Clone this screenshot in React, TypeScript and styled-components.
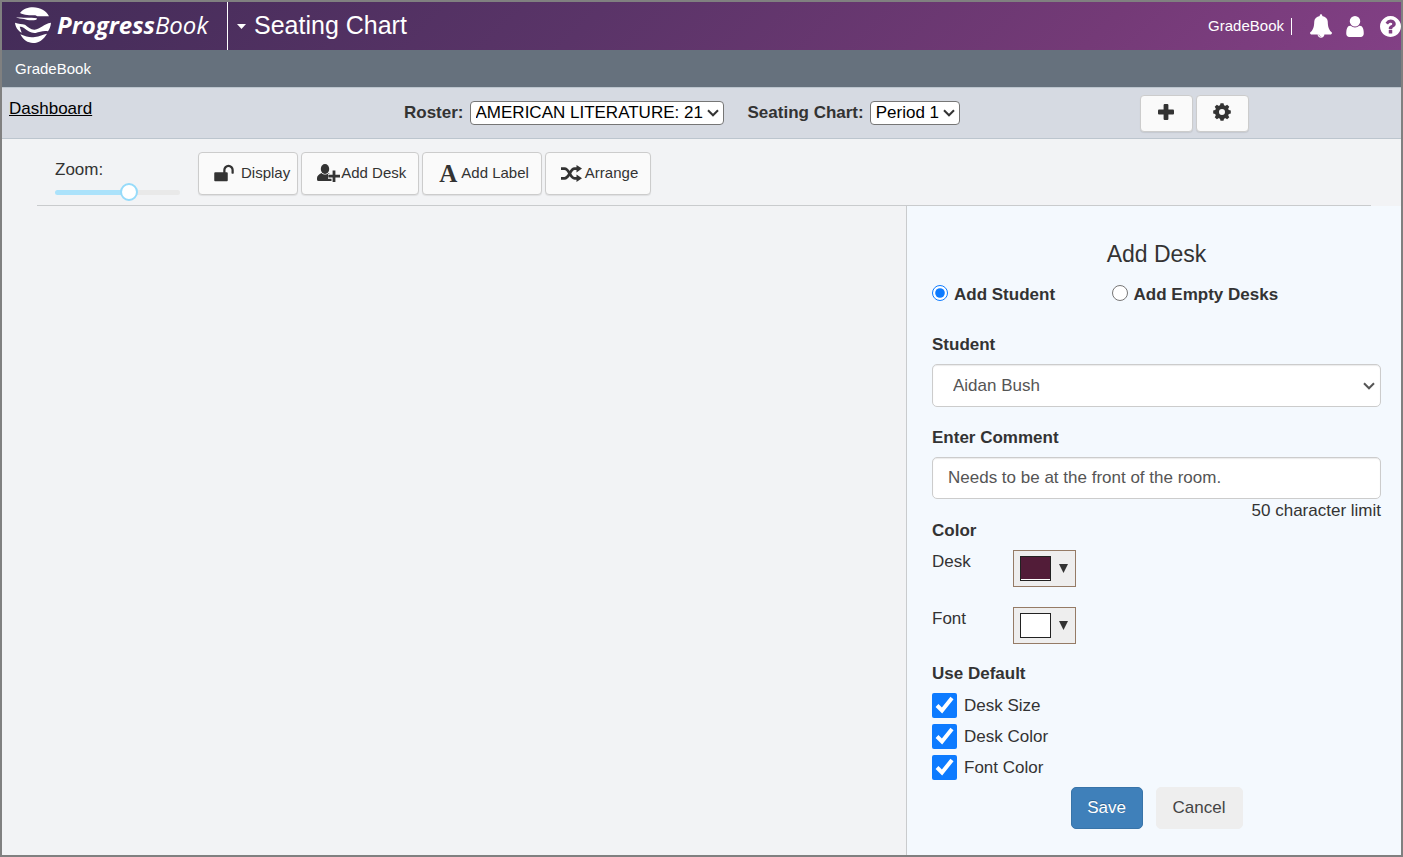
import React, { useState } from "react";
import styled, { createGlobalStyle } from "styled-components";

const GlobalStyle = createGlobalStyle`
  *, *::before, *::after { box-sizing: border-box; }
  body {
    margin: 0;
    background: #f2f3f5;
    color: #333;
    font-family: "Liberation Sans", Arial, sans-serif;
    font-size: 17px;
    line-height: 20px;
  }
  button, input, select { font: inherit; color: inherit; }
  svg { display: block; flex: none; }
`;

const Frame = styled.div`
  display: flex;
  flex-direction: column;
  min-height: 100vh;
  border: 2px solid #808080;
  overflow: hidden;
`;

const Header = styled.header`
  display: flex;
  align-items: center;
  height: 48px;
  padding-left: 13px;
  color: #fff;
  background: linear-gradient(135deg, #432c58 0%, #5a3468 42%, #743a77 78%, #824085 100%);
`;

const Brand = styled.a`
  display: flex;
  align-items: center;
  gap: 6px;
  width: 212px;
  height: 100%;
  padding-bottom: 3px;
  color: #fff;
  text-decoration: none;
  white-space: nowrap;
`;

const Wordmark = styled.span`
  font-family: "Open Sans", sans-serif;
  font-size: 24px;
  font-style: italic;
  line-height: 36px;
`;

const MenuButton = styled.button`
  display: flex;
  align-items: center;
  gap: 8px;
  height: 100%;
  padding: 0 9px;
  border: 0;
  border-left: 1px solid #fff;
  background: none;
  color: #fff;
`;

const Title = styled.h1`
  margin: 0;
  padding-bottom: 2px;
  font-size: 25px;
  font-weight: 400;
  line-height: 30px;
`;

const Account = styled.nav`
  display: flex;
  align-items: center;
  margin-left: auto;
  font-size: 15px;
`;

const AccountLink = styled.a`
  padding-right: 7px;
  color: #fff;
  text-decoration: none;
`;

const Divider = styled.span`
  width: 1px;
  height: 17px;
  margin-right: 18px;
  background: #fff;
`;

const IconButton = styled.button<{ $gap?: number }>`
  display: flex;
  margin: 0 ${(p) => p.$gap ?? 0}px 0 0;
  padding: 0;
  border: 0;
  background: none;
  color: #fff;
`;

const SubHeader = styled.div`
  height: 37px;
  padding: 9px 13px;
  background: #66717d;
  color: #fff;
  font-size: 15px;
`;

const SelectionBar = styled.div`
  display: grid;
  grid-template-columns: 402fr 736fr 261fr;
  align-items: center;
  height: 52px;
  border-top: 1px solid #bcc5ce;
  border-bottom: 1px solid #bcc5ce;
  background: #d6dae2;
`;

const DashboardLink = styled.a`
  align-self: start;
  padding: 11px 0 0 7px;
  color: #000;
`;

const Pickers = styled.div`
  display: flex;
  align-items: center;
  gap: 24px;
`;

const Picker = styled.label`
  display: flex;
  align-items: center;
  gap: 6px;
  font-weight: 700;
  white-space: nowrap;
`;

const SelectBox = styled.span`
  display: grid;
  align-items: center;

  > * { grid-area: 1 / 1; }
  > svg { justify-self: end; pointer-events: none; }
`;

const CompactSelect = styled.select`
  appearance: none;
  height: 24px;
  padding: 0 19px 0 5px;
  border: 1px solid #767676;
  border-radius: 4px;
  background: #fff;
  color: #000;
  font-weight: 400;

  + svg { margin-right: 5px; }
`;

const FieldSelect = styled.select`
  appearance: none;
  width: 100%;
  height: 43px;
  padding: 0 30px 0 20px;
  border: 1px solid #ccc;
  border-radius: 5px;
  background: #fff;
  box-shadow: inset 0 1px 1px rgba(0, 0, 0, 0.08);
  color: #555;

  + svg { margin-right: 6px; color: #555; }
`;

const Actions = styled.div`
  display: flex;
  gap: 3px;
`;

const ToolButton = styled.button`
  display: flex;
  align-items: center;
  height: 43px;
  border: 1px solid #ccc;
  border-radius: 4px;
  background: #fafafa;
  box-shadow: 0 1px 1px rgba(0, 0, 0, 0.08);
  color: #333;
  font-size: 15px;
  white-space: nowrap;
`;

const SquareButton = styled(ToolButton)`
  justify-content: center;
  width: 53px;
  height: 37px;
  padding: 0 1px 2px 0;
`;

const LabelButton = styled(ToolButton)<{ $gap: number; $end?: number }>`
  gap: ${(p) => p.$gap}px;
  padding: 0 ${(p) => p.$end ?? 12}px 1px 15px;
`;

const LetterIcon = styled.span`
  padding-left: 1px;
  font: 700 25px/25px "Liberation Serif", serif;
`;

const Toolbar = styled.div`
  display: flex;
  align-items: flex-start;
  gap: 3px;
  height: 67px;
  margin: 0 30px 0 35px;
  padding-top: 13px;
  border-bottom: 1px solid #c9cbcd;
`;

const ZoomControl = styled.label`
  display: flex;
  flex-direction: column;
  gap: 3px;
  width: 158px;
  padding: 8px 0 0 18px;
`;

const Slider = styled.input`
  appearance: none;
  width: 125px;
  height: 18px;
  margin: 0;
  background: none;

  &::-webkit-slider-runnable-track {
    height: 5px;
    border-radius: 3px;
    background: linear-gradient(to right, #abe2fb var(--filled), #e9e9e9 var(--filled));
  }
  &::-webkit-slider-thumb {
    appearance: none;
    width: 18px;
    height: 18px;
    margin-top: -7px;
    border: 2px solid #96dbfa;
    border-radius: 50%;
    background: #fff;
  }
`;

const Workspace = styled.main`
  display: flex;
  flex: 1;
`;

const Room = styled.section`
  flex: 1;
`;

const Panel = styled.form`
  width: 495px;
  padding: 34px 20px 26px 25px;
  border-left: 1px solid #c9cbcd;
  background: #f4f9fe;
`;

const PanelTitle = styled.h2`
  margin: 0 0 17px;
  font-size: 23px;
  font-weight: 400;
  line-height: 28px;
  text-align: center;
`;

const ModeRow = styled.div`
  display: grid;
  grid-template-columns: 2fr 3fr;
  margin-bottom: 30px;
`;

const ModeOption = styled.label`
  display: flex;
  gap: 6px;
  font-weight: 700;
`;

const Radio = styled.input`
  width: 16px;
  height: 16px;
  margin: 0;
  accent-color: #0d7bff;
`;

const Field = styled.div`
  margin-bottom: 21px;
`;

const Caption = styled.label`
  display: block;
  margin-bottom: 9px;
  font-weight: 700;
`;

const GroupTitle = styled.h3`
  margin: 0 0 9px;
  font-size: 17px;
  font-weight: 700;
`;

const CommentInput = styled.input`
  display: block;
  width: 100%;
  height: 42px;
  padding: 0 15px;
  border: 1px solid #ccc;
  border-radius: 5px;
  background: #fff;
  box-shadow: inset 0 1px 1px rgba(0, 0, 0, 0.08);
  color: #555;
`;

const Hint = styled.p`
  margin: 2px 0 0;
  text-align: right;
`;

const ColorRow = styled.div`
  display: flex;
  margin-bottom: 20px;

  > label { width: 81px; padding-top: 2px; }
`;

const ColorButton = styled.button`
  display: flex;
  align-items: center;
  gap: 8px;
  width: 63px;
  height: 37px;
  padding: 0 6px;
  border: 1px solid #957b66;
  background: #eee;
`;

const Swatch = styled.span<{ $color: string }>`
  width: 31px;
  height: 25px;
  border: 1px solid #222;
  background: ${(p) => p.$color};
  box-shadow: inset 0 -1px #fff;
`;

const CheckRow = styled.label`
  display: flex;
  align-items: center;
  gap: 7px;
  margin-bottom: 6px;
`;

const Checkbox = styled.input`
  width: 25px;
  height: 25px;
  margin: 0;
  accent-color: #0d7bff;
`;

const FormButtons = styled.div`
  display: flex;
  justify-content: center;
  gap: 13px;
  padding-top: 1px;
`;

const FormButton = styled.button<{ $primary?: boolean }>`
  height: 42px;
  width: ${(p) => (p.$primary ? 72 : 87)}px;
  border: 1px solid ${(p) => (p.$primary ? "#3874a9" : "#eee")};
  border-radius: 5px;
  background: ${(p) => (p.$primary ? "#3f80ba" : "#eee")};
  color: ${(p) => (p.$primary ? "#fff" : "#444")};
  text-shadow: ${(p) => (p.$primary ? "0 -1px 0 rgba(0, 0, 0, 0.25)" : "none")};
`;

const Chevron = () => (
  <svg width="12" height="8" viewBox="0 0 12 8" fill="none" stroke="currentColor" strokeWidth="2">
    <path d="M1 1.300 6 6.300 11 1.300" />
  </svg>
);

const LogoMark = () => (
  <svg width="36" height="36" viewBox="45 19 108 108" fill="#fff">
    <path d="M60 37C70 25 84 20 99 20C121 20 139 31 147 47H112L106 44C90 44 72 44 60 37Z" />
    <path d="M48 49C66 53 90 49 111 53L109 57C95 61 82 58 72 55C64 54 55 54 48 49Z" />
    <path d="M45 66C56 70 66 70 75 72C84 79 93 88 104 87C121 85 131 69 153 66C152 76 149 85 144 92C132 89 119 93 107 97C94 99 83 91 73 83C68 79 64 78 59 78L65 96C54 90 46 79 45 66Z" />
    <path d="M61 101C79 109 91 111 105 109C118 107 129 102 141 99C131 117 116 127 99 127C83 127 70 118 61 101Z" />
  </svg>
);

const BellIcon = () => (
  <svg width="22" height="24" viewBox="64 0 1664 1792" fill="currentColor">
    <path d="M912 1696q0-16-16-16-59 0-101.500-42.500t-42.500-101.500q0-16-16-16t-16 16q0 73 51.500 124.500t124.500 51.500q16 0 16-16zm816-288q0 52-38 90t-90 38h-448q0 106-75 181t-181 75-181-75-75-181h-448q-52 0-90-38t-38-90q50-42 91-88t85-119.500 74.500-158.500 50-206 19.500-260q0-152 117-282.500t307-158.500q-8-19-8-39 0-40 28-68t68-28 68 28 28 68q0 20-8 39 190 28 307 158.500t117 282.500q0 139 19.500 260t50 206 74.500 158.500 85 119.500 91 88z" />
  </svg>
);

const UserIcon = () => (
  <svg width="18" height="21" viewBox="256 128 1280 1536" fill="currentColor">
    <path d="M1536 1399q0 109-62.500 187t-150.500 78h-854q-88 0-150.500-78t-62.500-187q0-85 8.500-160.500t31.500-152 58.500-131 94-89 134.500-34.500q131 128 313 128t313-128q76 0 134.500 34.500t94 89 58.500 131 31.500 152 8.500 160.500zm-256-887q0 159-112.500 271.500t-271.500 112.500-271.500-112.500-112.500-271.500 112.500-271.500 271.500-112.500 271.500 112.500 112.500 271.500z" />
  </svg>
);

const HelpIcon = () => (
  <svg width="21" height="21" viewBox="128 128 1536 1536" fill="currentColor">
    <path d="M1024 1376v-192q0-14-9-23t-23-9h-192q-14 0-23 9t-9 23v192q0 14 9 23t23 9h192q14 0 23-9t9-23zm256-672q0-88-55.500-163t-138.500-116-170-41q-243 0-371 213-15 24 8 42l132 100q7 6 19 6 16 0 25-12 53-68 86-92 34-24 86-24 48 0 85.500 26t37.500 59q0 38-20 61t-68 45q-63 28-115.500 86.500t-52.500 125.500v36q0 14 9 23t23 9h192q14 0 23-9t9-23q0-19 21.500-49.500t54.500-49.500q32-18 49-28.500t46-35 44.500-48 28-60.500 12.500-81zm384 192q0 209-103 385.500t-279.500 279.500-385.500 103-385.500-103-279.500-279.500-103-385.500 103-385.500 279.500-279.500 385.500-103 385.500 103 279.500 279.500 103 385.500z" />
  </svg>
);

const PlusIcon = () => (
  <svg width="16" height="16" viewBox="0 0 16 16" fill="currentColor">
    <rect x="5.600" y="0" width="4.800" height="16" rx="1" />
    <rect x="0" y="5.600" width="16" height="4.800" rx="1" />
  </svg>
);

const GearIcon = () => (
  <svg width="18" height="18" viewBox="-9 -9 18 18" fill="currentColor">
    <circle r="5" fill="none" stroke="currentColor" strokeWidth="4" />
    {[0, 45, 90, 135, 180, 225, 270, 315].map((angle) => (
      <path key={angle} d="M-2.200 -6 -1.500 -8.800H1.500L2.200 -6Z" transform={`rotate(${angle})`} />
    ))}
  </svg>
);

const UnlockIcon = () => (
  <svg width="20" height="18" viewBox="64 64 1664 1536" fill="currentColor">
    <path d="M1728 576v256q0 26-19 45t-45 19h-64q-26 0-45-19t-19-45v-256q0-106-75-181t-181-75-181 75-75 181v192h96q40 0 68 28t28 68v576q0 40-28 68t-68 28h-960q-40 0-68-28t-28-68v-576q0-40 28-68t68-28h672v-192q0-185 131.500-316.500t316.500-131.500 316.500 131.500 131.500 316.500z" />
  </svg>
);

const UserPlusIcon = () => (
  <svg width="23" height="18" viewBox="0 0 23 18" fill="currentColor">
    <ellipse cx="8" cy="5" rx="4.200" ry="5" />
    <path d="M4.500 9C6.500 11 9.500 11 11.500 9L15 11.500V17H1.500Q0 17 0 15.500V14C0 11.500 2 10.500 4.500 9Z" />
    <path d="M17 6V18M11 12.200H23" stroke="#fafafa" strokeWidth="5" />
    <path d="M17 6.500V18M11.300 12.200H23" stroke="currentColor" strokeWidth="2.800" />
  </svg>
);

const ShuffleIcon = () => (
  <svg width="21" height="17" viewBox="0 0 21 17" fill="none" stroke="currentColor" strokeWidth="2.700">
    <path d="M0 3.600H3.500C8.500 3.600 9 13.300 13.500 13.300H17" />
    <path d="M0 13.300H3.500C8.500 13.300 9 3.600 13.500 3.600H17" />
    <path d="M15.500 0 21 3.600 15.500 7.400ZM15.500 9.500 21 13.300 15.500 17Z" fill="currentColor" stroke="none" />
  </svg>
);

const Triangle = ({ width, height }: { width: number; height: number }) => (
  <svg width={width} height={height} viewBox="0 0 10 10" preserveAspectRatio="none" fill="currentColor">
    <path d="M0 0H10L5 10Z" />
  </svg>
);

const COLORS = [
  { id: "desk", label: "Desk", value: "#521c38" },
  { id: "font", label: "Font", value: "#fff" },
];

const DEFAULTS = ["Desk Size", "Desk Color", "Font Color"];

export default function App() {
  const [zoom, setZoom] = useState(61);

  return (
    <>
      <GlobalStyle />
      <Frame>
        <Header>
          <Brand href="#home">
            <LogoMark />
            <Wordmark>
              <b>Progress</b>Book
            </Wordmark>
          </Brand>
          <MenuButton type="button">
            <Triangle width={9} height={5} />
            <Title>Seating Chart</Title>
          </MenuButton>
          <Account>
            <AccountLink href="#gradebook">GradeBook</AccountLink>
            <Divider />
            <IconButton type="button" aria-label="Notifications" $gap={14}><BellIcon /></IconButton>
            <IconButton type="button" aria-label="Profile" $gap={16}><UserIcon /></IconButton>
            <IconButton type="button" aria-label="Help"><HelpIcon /></IconButton>
          </Account>
        </Header>

        <SubHeader>GradeBook</SubHeader>

        <SelectionBar>
          <DashboardLink href="#dashboard">Dashboard</DashboardLink>
          <Pickers>
            <Picker>
              Roster:
              <SelectBox>
                <CompactSelect><option>AMERICAN LITERATURE: 21</option></CompactSelect>
                <Chevron />
              </SelectBox>
            </Picker>
            <Picker>
              Seating Chart:
              <SelectBox>
                <CompactSelect><option>Period 1</option></CompactSelect>
                <Chevron />
              </SelectBox>
            </Picker>
          </Pickers>
          <Actions>
            <SquareButton type="button" aria-label="Add seating chart"><PlusIcon /></SquareButton>
            <SquareButton type="button" aria-label="Settings"><GearIcon /></SquareButton>
          </Actions>
        </SelectionBar>

        <Toolbar>
          <ZoomControl>
            Zoom:
            <Slider
              type="range"
              value={zoom}
              onChange={(e) => setZoom(Number(e.target.value))}
              style={{ "--filled": `${zoom}%` } as React.CSSProperties}
            />
          </ZoomControl>
          <LabelButton type="button" $gap={7} $end={7}><UnlockIcon />Display</LabelButton>
          <LabelButton type="button" $gap={1}><UserPlusIcon />Add Desk</LabelButton>
          <LabelButton type="button" $gap={4}><LetterIcon aria-hidden>A</LetterIcon>Add Label</LabelButton>
          <LabelButton type="button" $gap={3}><ShuffleIcon />Arrange</LabelButton>
        </Toolbar>

        <Workspace>
          <Room aria-label="Classroom" />
          <Panel onSubmit={(e) => e.preventDefault()}>
            <PanelTitle>Add Desk</PanelTitle>
            <ModeRow>
              <ModeOption><Radio type="radio" name="mode" defaultChecked />Add Student</ModeOption>
              <ModeOption><Radio type="radio" name="mode" />Add Empty Desks</ModeOption>
            </ModeRow>

            <Field>
              <Caption htmlFor="student">Student</Caption>
              <SelectBox>
                <FieldSelect id="student"><option>Aidan Bush</option></FieldSelect>
                <Chevron />
              </SelectBox>
            </Field>

            <Caption htmlFor="comment">Enter Comment</Caption>
            <CommentInput id="comment" maxLength={50} defaultValue="Needs to be at the front of the room." />
            <Hint>50 character limit</Hint>

            <GroupTitle>Color</GroupTitle>
            {COLORS.map((c) => (
              <ColorRow key={c.id}>
                <label htmlFor={c.id}>{c.label}</label>
                <ColorButton id={c.id} type="button">
                  <Swatch $color={c.value} />
                  <Triangle width={9} height={9} />
                </ColorButton>
              </ColorRow>
            ))}

            <GroupTitle>Use Default</GroupTitle>
            {DEFAULTS.map((name) => (
              <CheckRow key={name}>
                <Checkbox type="checkbox" defaultChecked />
                {name}
              </CheckRow>
            ))}

            <FormButtons>
              <FormButton type="submit" $primary>Save</FormButton>
              <FormButton type="button">Cancel</FormButton>
            </FormButtons>
          </Panel>
        </Workspace>
      </Frame>
    </>
  );
}
